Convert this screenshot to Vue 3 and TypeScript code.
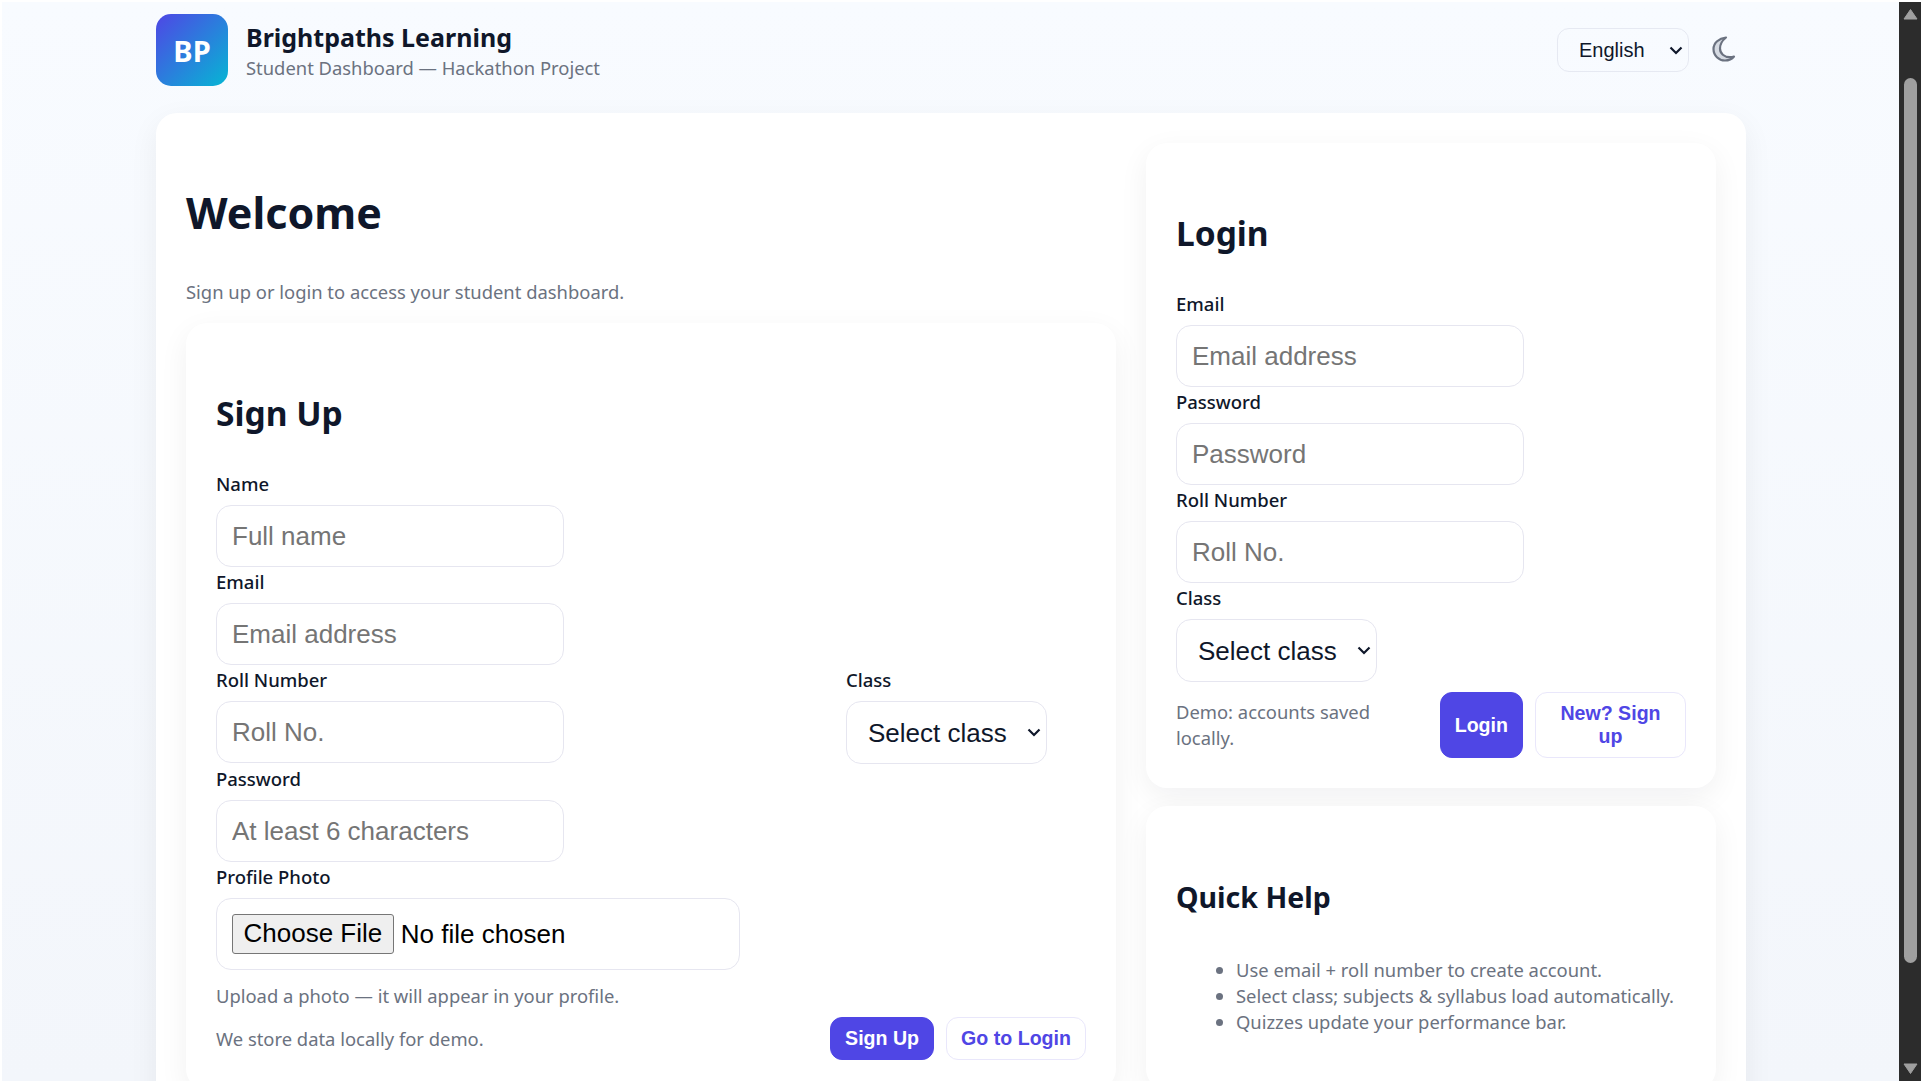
<template>
  <div class="frame">
    <div class="page">
      <header class="topbar">
        <div class="brand">
          <div class="logo">BP</div>
          <div>
            <div class="brand-title">Brightpaths Learning</div>
            <div class="brand-sub">Student Dashboard — Hackathon Project</div>
          </div>
        </div>
        <div class="top-actions">
          <select class="lang">
            <option>English</option>
          </select>
          <button class="theme" aria-label="Toggle theme">
            <svg width="24" height="26" viewBox="0 0 24 26">
              <path
                d="M14 1.500C7 2.300 1.500 6.800 1.500 13c0 6.500 5.300 11.500 11.500 11.500 3.800 0 7-1.500 9-4-1.200.5-2.700.7-4 .7-5.800 0-10-3.700-10-8.700 0-4.400 2.300-8.100 6-11z"
                fill="#d5dae2"
                stroke="#6b7280"
                stroke-width="2.200"
                stroke-linejoin="round"
              />
            </svg>
          </button>
        </div>
      </header>

      <main class="panel">
        <section class="left">
          <h1>Welcome</h1>
          <p class="muted intro">Sign up or login to access your student dashboard.</p>

          <form class="card" @submit.prevent>
            <h2>Sign Up</h2>
            <div class="field">
              <label>Name</label>
              <input type="text" placeholder="Full name" />
            </div>
            <div class="field">
              <label>Email</label>
              <input type="email" placeholder="Email address" />
            </div>
            <div class="row">
              <div class="field">
                <label>Roll Number</label>
                <input type="text" placeholder="Roll No." />
              </div>
              <div class="field">
                <label>Class</label>
                <select class="class-select">
                  <option>Select class</option>
                </select>
              </div>
            </div>
            <div class="field">
              <label>Password</label>
              <input type="password" placeholder="At least 6 characters" />
            </div>
            <div class="field">
              <label>Profile Photo</label>
              <input class="file" type="file" />
            </div>
            <p class="muted hint">Upload a photo — it will appear in your profile.</p>
            <div class="actions">
              <span class="muted">We store data locally for demo.</span>
              <div class="buttons">
                <button class="btn primary">Sign Up</button>
                <button class="btn ghost">Go to Login</button>
              </div>
            </div>
          </form>
        </section>

        <aside class="right">
          <form class="card" @submit.prevent>
            <h2>Login</h2>
            <div class="field">
              <label>Email</label>
              <input type="email" placeholder="Email address" />
            </div>
            <div class="field">
              <label>Password</label>
              <input type="password" placeholder="Password" />
            </div>
            <div class="field">
              <label>Roll Number</label>
              <input type="text" placeholder="Roll No." />
            </div>
            <div class="field">
              <label>Class</label>
              <select class="class-select">
                <option>Select class</option>
              </select>
            </div>
            <div class="actions login-actions">
              <span class="muted">Demo: accounts saved locally.</span>
              <div class="buttons">
                <button class="btn primary">Login</button>
                <button class="btn ghost narrow">New? Sign up</button>
              </div>
            </div>
          </form>

          <div class="card help">
            <h2>Quick Help</h2>
            <ul class="muted">
              <li v-for="tip in tips" :key="tip">{{ tip }}</li>
            </ul>
          </div>
        </aside>
      </main>
    </div>

    <div class="scrollbar">
      <svg class="arrow up" width="15" height="12" viewBox="0 0 15 12">
        <path d="M7.500 1.500 14 11H1z" fill="#9f9f9f" stroke="#9f9f9f" stroke-linejoin="round" />
      </svg>
      <div class="thumb"></div>
      <svg class="arrow down" width="15" height="12" viewBox="0 0 15 12">
        <path d="M7.500 10.500 14 1H1z" fill="#9f9f9f" stroke="#9f9f9f" stroke-linejoin="round" />
      </svg>
    </div>
  </div>
</template>

<script setup lang="ts">
const tips: string[] = [
  'Use email + roll number to create account.',
  'Select class; subjects & syllabus load automatically.',
  'Quizzes update your performance bar.',
]
</script>

<style>
html,
body {
  margin: 0;
  height: 100%;
  overflow: hidden;
  background: #fff;
}
</style>

<style scoped>
.frame {
  box-sizing: border-box;
  height: 100vh;
  padding: 2px;
  display: flex;
  background: #fff;
  font-family: 'Noto Sans', 'Open Sans', sans-serif;
  color: #0f172a;
}

.page {
  flex: 1;
  min-width: 0;
  overflow: hidden;
  padding: 12px 153px 0 154px;
  background: linear-gradient(180deg, #f8fbff 0%, #f3f6fb 100%);
}

.topbar {
  display: flex;
  align-items: center;
  justify-content: space-between;
  height: 72px;
  margin-bottom: 27px;
}

.brand {
  display: flex;
  align-items: center;
  gap: 18px;
}

.logo {
  width: 72px;
  height: 72px;
  border-radius: 15px;
  display: flex;
  align-items: center;
  justify-content: center;
  background: linear-gradient(135deg, #4f46e5, #06b6d4);
  color: #fff;
  font-size: 29px;
  font-weight: 700;
}

.brand-title {
  font-size: 25px;
  line-height: 34px;
  font-weight: 700;
}

.brand-sub {
  font-size: 18.4px;
  line-height: 27px;
  color: #6b7280;
}

.top-actions {
  display: flex;
  align-items: center;
  gap: 23px;
  padding-right: 10px;
}

.lang,
.class-select {
  appearance: none;
  background-image: url("data:image/svg+xml,%3Csvg xmlns='http://www.w3.org/2000/svg' width='14' height='9' viewBox='0 0 14 9'%3E%3Cpath d='M1.500 1.500 7 7l5.500-5.500' fill='none' stroke='%230f172a' stroke-width='2.200'/%3E%3C/svg%3E");
  background-repeat: no-repeat;
  background-position: right 5px center;
}

.lang {
  width: 132px;
  height: 44px;
  padding: 0 6px 0 21px;
  border: 1.5px solid #e6e9f2;
  border-radius: 12px;
  background-color: transparent;
  color: #0f172a;
  font: 20px 'Liberation Sans', Arial, sans-serif;
}

.theme {
  display: flex;
  padding: 0;
  border: 0;
  margin-top: -2px;
  background: none;
}

.panel {
  display: grid;
  grid-template-columns: 930px 570px;
  gap: 30px;
  padding: 30px;
  background: #fff;
  border-radius: 21px;
  box-shadow: 0 9px 30px rgba(15, 23, 42, 0.06);
}

h1 {
  margin: 38px 0 34px;
  font-size: 43px;
  line-height: 64px;
  font-weight: 700;
}

h2 {
  margin: 36px 0 34px;
  font-size: 33.500px;
  line-height: 48px;
  font-weight: 700;
}

.muted {
  color: #6b7280;
  font-size: 18.400px;
  line-height: 26px;
}

.intro {
  margin: 0 0 18px;
}

.card {
  padding: 30px;
  background: #fff;
  border-radius: 21px;
  box-shadow: 0 9px 30px rgba(15, 23, 42, 0.06);
}

.right {
  display: flex;
  flex-direction: column;
  gap: 18px;
}

.help {
  flex: 1;
}

.help h2 {
  margin: 37px 0 0;
  font-size: 28.500px;
}

.field {
  margin-top: 2px;
}

label {
  display: block;
  height: 26px;
  margin-bottom: 8px;
  font-size: 18.500px;
  line-height: 26px;
  font-weight: 500;
}

input {
  display: block;
  box-sizing: border-box;
  width: 348px;
  height: 62px;
  padding: 0 15px;
  border: 1.5px solid #e6e6f0;
  border-radius: 15px;
  background: #fff;
  font: 26px 'Liberation Sans', Arial, sans-serif;
}

input::placeholder {
  color: #757575;
}

.file {
  width: 524px;
  height: 72px;
  padding: 14.500px 15px;
  color: #000;
}

.file::file-selector-button {
  height: 40px;
  margin-right: 7px;
  padding: 0 10.500px;
  border: 1.5px solid #767676;
  border-radius: 3px;
  background: #efefef;
  color: #000;
  font: 26px 'Liberation Sans', Arial, sans-serif;
}

.class-select {
  display: block;
  width: 201px;
  height: 63px;
  padding: 0 6px 0 21px;
  border: 1.5px solid #e6e6f0;
  border-radius: 15px;
  background-color: #fff;
  color: #0f172a;
  font: 26px 'Liberation Sans', Arial, sans-serif;
}

.row {
  display: grid;
  grid-template-columns: 630px 1fr;
}

.hint {
  margin: 13px 0 8px;
}

.actions {
  display: flex;
  align-items: center;
  justify-content: space-between;
  gap: 12px;
}

.login-actions {
  margin-top: 10px;
}

.buttons {
  display: flex;
  gap: 12px;
  flex-shrink: 0;
}

.btn {
  padding: 9px 14px;
  border-radius: 12px;
  font: 700 19.600px/23px 'Liberation Sans', Arial, sans-serif;
}

.primary {
  border: 1.5px solid #4f46e5;
  background: #4f46e5;
  color: #fff;
}

.ghost {
  border: 1.5px solid #e9e7fb;
  background: #fff;
  color: #4f46e5;
}

.narrow {
  width: 151px;
}

ul {
  margin: 36px 0 0;
  padding-left: 60px;
}

.scrollbar {
  width: 22px;
  flex-shrink: 0;
  display: flex;
  flex-direction: column;
  align-items: center;
  background: #2c2c2c;
}

.arrow.up {
  margin-top: 6px;
}

.thumb {
  width: 13px;
  height: 885px;
  margin-top: 58px;
  background: #9f9f9f;
  border-radius: 7px;
}

.arrow.down {
  margin-top: 100px;
}
</style>
